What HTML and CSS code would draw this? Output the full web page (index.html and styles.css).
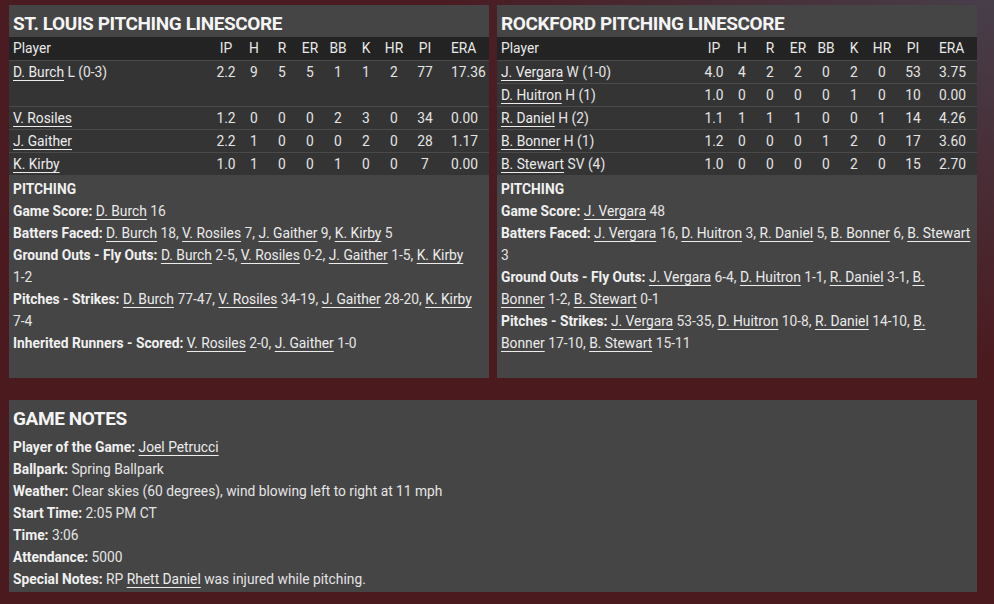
FILE: index.html
```html
<!DOCTYPE html>
<html lang="en">
<head>
<meta charset="utf-8">
<title>Pitching Linescore</title>
<link rel="stylesheet" href="styles.css">
</head>
<body>
<div class="page">
  <div class="top">
    <section class="panel">
      <h2 class="title">ST. LOUIS PITCHING LINESCORE</h2>
      <table class="score">
        <colgroup><col><col class="c"><col class="c"><col class="c"><col class="c"><col class="c"><col class="c"><col class="c"><col class="pi"><col class="era"></colgroup>
        <thead>
          <tr><th class="name">Player</th><th>IP</th><th>H</th><th>R</th><th>ER</th><th>BB</th><th>K</th><th>HR</th><th>PI</th><th class="e">ERA</th></tr>
        </thead>
        <tbody>
          <tr class="tall"><td class="name"><a>D. Burch</a> L (0-3)</td><td>2.2</td><td>9</td><td>5</td><td>5</td><td>1</td><td>1</td><td>2</td><td>77</td><td class="e">17.36</td></tr>
          <tr><td class="name"><a>V. Rosiles</a></td><td>1.2</td><td>0</td><td>0</td><td>0</td><td>2</td><td>3</td><td>0</td><td>34</td><td class="e">0.00</td></tr>
          <tr><td class="name"><a>J. Gaither</a></td><td>2.2</td><td>1</td><td>0</td><td>0</td><td>0</td><td>2</td><td>0</td><td>28</td><td class="e">1.17</td></tr>
          <tr><td class="name"><a>K. Kirby</a></td><td>1.0</td><td>1</td><td>0</td><td>0</td><td>1</td><td>0</td><td>0</td><td>7</td><td class="e">0.00</td></tr>
        </tbody>
      </table>
      <div class="notes">
        <div class="line"><b>PITCHING</b></div>
        <div class="line"><b>Game Score:</b> <a>D. Burch</a> 16</div>
        <div class="line"><b>Batters Faced:</b> <a>D. Burch</a> 18, <a>V. Rosiles</a> 7, <a>J. Gaither</a> 9, <a>K. Kirby</a> 5</div>
        <div class="line"><b>Ground Outs - Fly Outs:</b> <a>D. Burch</a> <span class="nw">2-5,</span> <a>V. Rosiles</a> <span class="nw">0-2,</span> <a>J. Gaither</a> <span class="nw">1-5,</span> <a>K. Kirby</a> <span class="nw">1-2</span></div>
        <div class="line"><b>Pitches - Strikes:</b> <a>D. Burch</a> <span class="nw">77-47,</span> <a>V. Rosiles</a> <span class="nw">34-19,</span> <a>J. Gaither</a> <span class="nw">28-20,</span> <a>K. Kirby</a> <span class="nw">7-4</span></div>
        <div class="line"><b>Inherited Runners - Scored:</b> <a>V. Rosiles</a> <span class="nw">2-0,</span> <a>J. Gaither</a> <span class="nw">1-0</span></div>
      </div>
    </section>
    <section class="panel">
      <h2 class="title">ROCKFORD PITCHING LINESCORE</h2>
      <table class="score">
        <colgroup><col><col class="c"><col class="c"><col class="c"><col class="c"><col class="c"><col class="c"><col class="c"><col class="pi"><col class="era"></colgroup>
        <thead>
          <tr><th class="name">Player</th><th>IP</th><th>H</th><th>R</th><th>ER</th><th>BB</th><th>K</th><th>HR</th><th>PI</th><th class="e">ERA</th></tr>
        </thead>
        <tbody>
          <tr><td class="name"><a>J. Vergara</a> W (1-0)</td><td>4.0</td><td>4</td><td>2</td><td>2</td><td>0</td><td>2</td><td>0</td><td>53</td><td class="e">3.75</td></tr>
          <tr><td class="name"><a>D. Huitron</a> H (1)</td><td>1.0</td><td>0</td><td>0</td><td>0</td><td>0</td><td>1</td><td>0</td><td>10</td><td class="e">0.00</td></tr>
          <tr><td class="name"><a>R. Daniel</a> H (2)</td><td>1.1</td><td>1</td><td>1</td><td>1</td><td>0</td><td>0</td><td>1</td><td>14</td><td class="e">4.26</td></tr>
          <tr><td class="name"><a>B. Bonner</a> H (1)</td><td>1.2</td><td>0</td><td>0</td><td>0</td><td>1</td><td>2</td><td>0</td><td>17</td><td class="e">3.60</td></tr>
          <tr><td class="name"><a>B. Stewart</a> SV (4)</td><td>1.0</td><td>0</td><td>0</td><td>0</td><td>0</td><td>2</td><td>0</td><td>15</td><td class="e">2.70</td></tr>
        </tbody>
      </table>
      <div class="notes">
        <div class="line"><b>PITCHING</b></div>
        <div class="line"><b>Game Score:</b> <a>J. Vergara</a> 48</div>
        <div class="line"><b>Batters Faced:</b> <a>J. Vergara</a> 16, <a>D. Huitron</a> 3, <a>R. Daniel</a> 5, <a>B. Bonner</a> 6, <a>B. Stewart</a> 3</div>
        <div class="line"><b>Ground Outs - Fly Outs:</b> <a>J. Vergara</a> <span class="nw">6-4,</span> <a>D. Huitron</a> <span class="nw">1-1,</span> <a>R. Daniel</a> <span class="nw">3-1,</span> <a>B. Bonner</a> <span class="nw">1-2,</span> <a>B. Stewart</a> <span class="nw">0-1</span></div>
        <div class="line"><b>Pitches - Strikes:</b> <a>J. Vergara</a> <span class="nw">53-35,</span> <a>D. Huitron</a> <span class="nw">10-8,</span> <a>R. Daniel</a> <span class="nw">14-10,</span> <a>B. Bonner</a> <span class="nw">17-10,</span> <a>B. Stewart</a> <span class="nw">15-11</span></div>
      </div>
    </section>
  </div>
  <section class="panel game">
    <h2 class="title">GAME NOTES</h2>
    <div class="gnotes">
      <div class="line"><b>Player of the Game:</b> <a>Joel Petrucci</a></div>
      <div class="line"><b>Ballpark:</b> Spring Ballpark</div>
      <div class="line"><b>Weather:</b> Clear skies (60 degrees), wind blowing left to right at 11 mph</div>
      <div class="line"><b>Start Time:</b> 2:05 PM CT</div>
      <div class="line"><b>Time:</b> 3:06</div>
      <div class="line"><b>Attendance:</b> 5000</div>
      <div class="line"><b>Special Notes:</b> RP <a>Rhett Daniel</a> was injured while pitching.</div>
    </div>
  </section>
</div>
</body>
</html>
```
FILE: styles.css
```css
html, body {
  margin: 0;
  padding: 0;
  height: 100%;
}
body {
  background:
    radial-gradient(ellipse 55% 60% at 100% 0%, rgba(70, 66, 78, 0.9) 0%, rgba(70, 66, 78, 0) 100%),
    linear-gradient(180deg, #4a1c22 0%, #4b1a1f 60%, #4a1a1e 100%);
  font-family: Roboto, "Open Sans", sans-serif;
  font-size: 13.8px;
  color: #e4e4e4;
  overflow: hidden;
}
.page {
  padding: 5px 17px 0 9px;
}
.top {
  display: flex;
  gap: 8px;
  align-items: stretch;
}
.panel {
  background: #454545;
  width: 480px;
}
.title {
  margin: 0;
  height: 32px;
  line-height: 37px;
  padding: 0 4px;
  font-size: 19px;
  font-weight: 700;
  color: #f4f4f4;
  letter-spacing: -0.4px;
  white-space: nowrap;
}
.score {
  width: 100%;
  border-collapse: collapse;
  table-layout: fixed;
}
.score col.c { width: 28px; }
.score col.pi { width: 34px; }
.score col.era { width: 47px; }
.score th,
.score td {
  height: 22px;
  padding: 0;
  text-align: center;
  font-weight: 400;
  line-height: 22px;
  white-space: nowrap;
  vertical-align: top;
}
.score thead tr {
  background: #232323;
  color: #e8e8e8;
}
.score thead th {
  height: 23px;
  line-height: 23px;
}
.score tbody tr {
  background: #343434;
  border-top: 1px solid #4a4a4a;
}
.score tbody tr.tall td {
  height: 45px;
}
.score .name {
  text-align: left;
  padding-left: 4px;
}
.score .e {
  text-align: left;
  padding-left: 9px;
}
a {
  color: #ececec;
  text-decoration: underline;
  text-underline-offset: 3px;
  text-decoration-thickness: 1px;
}
.nw {
  white-space: nowrap;
}
.notes {
  padding: 3px 6px 24px 4px;
}
.line {
  line-height: 22px;
}
b {
  font-weight: 700;
  color: #f0f0f0;
}
.game {
  width: 968px;
  margin-top: 22px;
}
.game .title {
  height: 36px;
  line-height: 37px;
}
.gnotes {
  padding: 0 4px 2px 4px;
}
```
